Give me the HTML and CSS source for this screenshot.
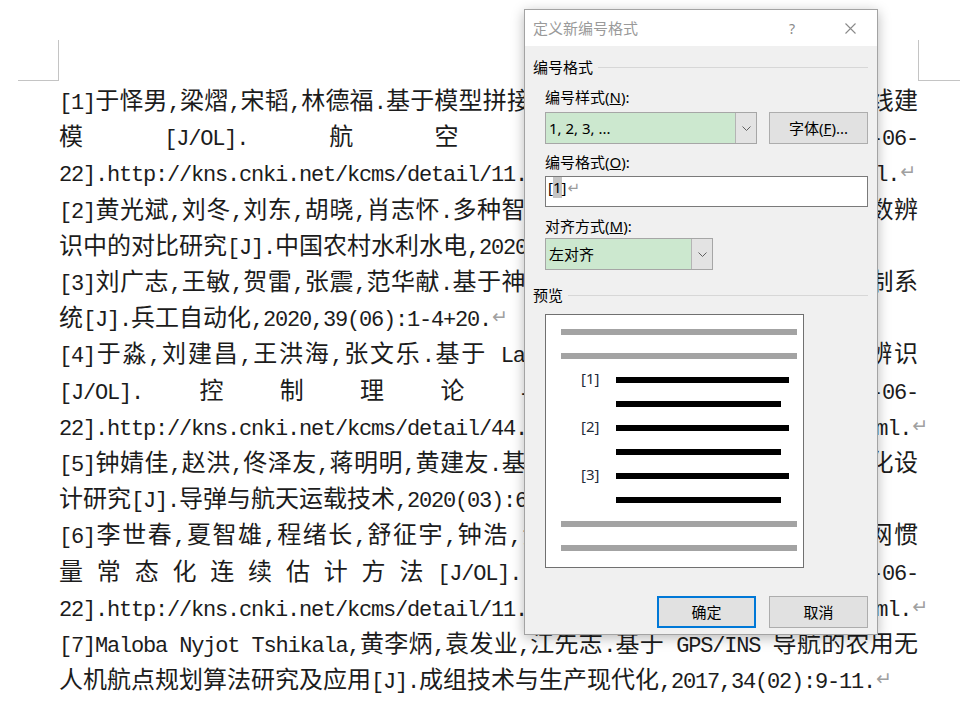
FILE: index.html
```html
<!DOCTYPE html>
<html lang="zh-CN">
<head>
<meta charset="UTF-8">
<title>定义新编号格式</title>
<link rel="stylesheet" href="styles.css">
</head>
<body>
<div class="marks">
    <div class="mark left"></div>
    <div class="mark right"></div>
</div>

<div class="doc">
    <div class="ln"><span class="m">[1]</span>于怿男<span class="m">,</span>梁熠<span class="m">,</span>宋韬<span class="m">,</span>林德福<span class="m">.</span>基于模型拼接的大展弦比飞翼布局无人机全包线建</div>
    <div class="ln">模<span class="m">[J/OL].</span>航空学报<span class="m">:1-14[2020-06-</span></div>
    <div class="ln end"><span class="m">22].http://kns.cnki.net/kcms/detail/11.1929.V.20200615.1406.0004.html.</span><span class="pm">↵</span></div>

    <div class="ln"><span class="m">[2]</span>黄光斌<span class="m">,</span>刘冬<span class="m">,</span>刘东<span class="m">,</span>胡晓<span class="m">,</span>肖志怀<span class="m">.</span>多种智能优化算法在水轮机调节系统参数辨</div>
    <div class="ln end">识中的对比研究<span class="m">[J].</span>中国农村水利水电<span class="m">,2020(06):108-112.</span><span class="pm">↵</span></div>

    <div class="ln"><span class="m">[3]</span>刘广志<span class="m">,</span>王敏<span class="m">,</span>贺雷<span class="m">,</span>张震<span class="m">,</span>范华献<span class="m">.</span>基于神经网络的电动舵机自适应滑模控制系</div>
    <div class="ln end">统<span class="m">[J].</span>兵工自动化<span class="m">,2020,39(06):1-4+20.</span><span class="pm">↵</span></div>

    <div class="ln"><span class="m">[4]</span>于淼<span class="m">,</span>刘建昌<span class="m">,</span>王洪海<span class="m">,</span>张文乐<span class="m">.</span>基于<span class="m"> Laguerre </span>函数的分数阶系统在线辨识</div>
    <div class="ln"><span class="m">[J/OL].</span>控制理论与应用<span class="m">:1-9[2020-06-</span></div>
    <div class="ln end"><span class="m">22].http://kns.cnki.net/kcms/detail/44.1240.TP.20200615.1023.0024.html.</span><span class="pm">↵</span></div>

    <div class="ln"><span class="m">[5]</span>钟婧佳<span class="m">,</span>赵洪<span class="m">,</span>佟泽友<span class="m">,</span>蒋明明<span class="m">,</span>黄建友<span class="m">.</span>基于代理模型的火箭发动机喷管优化设</div>
    <div class="ln end">计研究<span class="m">[J].</span>导弹与航天运载技术<span class="m">,2020(03):65-70.</span><span class="pm">↵</span></div>

    <div class="ln"><span class="m">[6]</span>李世春<span class="m">,</span>夏智雄<span class="m">,</span>程绪长<span class="m">,</span>舒征宇<span class="m">,</span>钟浩<span class="m">,</span>涂春鸣<span class="m">.</span>基于广域相量测量的电网惯</div>
    <div class="ln">量常态化连续估计方法<span class="m">[J/OL].</span>中国舰船研究<span class="m">:1-9[2020-06-</span></div>
    <div class="ln end"><span class="m">22].http://kns.cnki.net/kcms/detail/11.2107.TM.20200615.1502.0003.html.</span><span class="pm">↵</span></div>

    <div class="ln"><span class="m">[7]Maloba Nyjot Tshikala,</span>黄李炳<span class="m">,</span>袁发业<span class="m">,</span>江先志<span class="m">.</span>基于<span class="m"> GPS/INS </span>导航的农用无</div>
    <div class="ln end">人机航点规划算法研究及应用<span class="m">[J].</span>成组技术与生产现代化<span class="m">,2017,34(02):9-11.</span><span class="pm">↵</span></div>
</div>

<div class="dlg">
    <div class="dlg-title">
        <span class="dlg-name">定义新编号格式</span>
        <span class="dlg-help">?</span>
        <span class="dlg-close">
            <svg width="11" height="11" viewBox="0 0 11 11"><path d="M0.5 0.5L10.5 10.5M10.5 0.5L0.5 10.5" stroke="#8a8a8a" stroke-width="1.1" fill="none"/></svg>
        </span>
    </div>
    <div class="dlg-body">
        <div class="group"><span>编号格式</span><i class="rule"></i></div>

        <div class="field-label">编号样式(<u>N</u>):</div>
        <div class="row">
            <div class="combo combo-style">
                <span class="combo-val">1, 2, 3, ...</span>
                <span class="combo-btn"><svg width="9" height="5" viewBox="0 0 9 5"><polyline points="0.5,0.5 4.5,4.5 8.5,0.5" stroke="#606060" fill="none"/></svg></span>
            </div>
            <div class="btn">字体(<u>F</u>)...</div>
        </div>

        <div class="field-label">编号格式(<u>O</u>):</div>
        <div class="input">[<span class="sel">1</span>]<span class="mark-pm">↵</span></div>

        <div class="field-label">对齐方式(<u>M</u>):</div>
        <div class="combo combo-align">
            <span class="combo-val">左对齐</span>
            <span class="combo-btn"><svg width="9" height="5" viewBox="0 0 9 5"><polyline points="0.5,0.5 4.5,4.5 8.5,0.5" stroke="#606060" fill="none"/></svg></span>
        </div>

        <div class="group group-pv"><span>预览</span><i class="rule"></i></div>
        <div class="preview">
            <div class="pv-row"><i class="bar gray"></i></div>
            <div class="pv-row"><i class="bar gray"></i></div>
            <div class="pv-row"><span class="pv-num">[1]</span><i class="bar long"></i></div>
            <div class="pv-row"><i class="bar short"></i></div>
            <div class="pv-row"><span class="pv-num">[2]</span><i class="bar long"></i></div>
            <div class="pv-row"><i class="bar short"></i></div>
            <div class="pv-row"><span class="pv-num">[3]</span><i class="bar long"></i></div>
            <div class="pv-row"><i class="bar short"></i></div>
            <div class="pv-row"><i class="bar gray"></i></div>
            <div class="pv-row"><i class="bar gray"></i></div>
        </div>

        <div class="actions">
            <div class="btn primary">确定</div>
            <div class="btn">取消</div>
        </div>
    </div>
</div>
</body>
</html>
```

FILE: styles.css
```css
*{
    margin:0;
    padding:0;
    box-sizing:border-box;
}
body{
    background:#fff;
    width:970px;
    height:701px;
    overflow:hidden;
    position:relative;
}
/* page corner marks */
.marks{
    display:flex;
    justify-content:space-between;
    padding:40px 10px 0 18px;
}
.mark{
    height:41px;
    border-bottom:1px solid #c4c4c4;
}
.mark.left{
    width:41px;
    border-right:1px solid #c4c4c4;
}
.mark.right{
    width:42px;
    border-left:1px solid #c4c4c4;
}
/* document text */
.doc{
    width:859px;
    margin-left:59px;
    font-family:"Noto Sans CJK SC",sans-serif;
    font-size:24px;
    line-height:36.2px;
    color:#1c1c1c;
}
.ln{
    text-align:justify;
    text-align-last:justify;
}
.ln.end{
    text-align-last:left;
}
.m{
    font-family:"Liberation Mono",monospace;
    font-size:22px;
    letter-spacing:-1.2px;
    line-height:1;
}
.pm{
    font-family:"DejaVu Sans",sans-serif;
    font-size:19px;
    line-height:1;
    color:#a0a0a0;
    margin-left:1px;
    position:relative;
    top:-3px;
}
/* dialog */
.dlg{
    position:absolute;
    left:524px;
    top:9px;
    width:354px;
    height:626px;
    border:1px solid #a3a3a3;
    background:#f0f0f0;
    box-shadow:0 3px 12px rgba(0,0,0,0.28);
    font-family:"Noto Sans","Noto Sans CJK SC",sans-serif;
    font-size:15px;
    color:#000;
    z-index:2;
}
.dlg-title{
    height:36px;
    background:#fff;
    display:flex;
    align-items:center;
    padding-left:8px;
    color:#9a9a9a;
}
.dlg-name{
    flex:1;
    line-height:20px;
}
.dlg-help{
    width:20px;
    text-align:center;
    margin-right:25px;
    font-size:14px;
    color:#8a8a8a;
}
.dlg-close{
    width:46px;
    margin-right:4px;
    display:flex;
    justify-content:center;
    align-items:center;
}
.dlg-close svg{
    display:block;
}
.dlg-body{
    padding:11px 9px 0 8px;
}
.group{
    display:flex;
    align-items:center;
    height:20px;
    line-height:20px;
    gap:5px;
}
.group .rule{
    flex:1;
    border-top:1px solid #d7d7d7;
    height:0;
}
.group-pv{
    margin-top:15px;
}
.field-label{
    margin-left:12px;
    height:20px;
    line-height:20px;
}
.group + .field-label{
    margin-top:10px;
}
.row + .field-label{
    margin-top:8px;
}
.input + .field-label{
    margin-top:9px;
}
.row{
    display:flex;
    gap:12px;
    margin:5px 0 0 12px;
}
.combo{
    height:32px;
    display:flex;
    border:1px solid #a6a6a6;
    background:#cce8cf;
}
.combo-style{
    width:212px;
}
.combo-align{
    width:168px;
    margin:2px 0 0 12px;
}
.combo-val{
    flex:1;
    padding-left:3px;
    line-height:30px;
}
.combo-btn{
    width:21px;
    background:#e3e3e3;
    border-left:1px solid #b4b4b4;
    display:flex;
    align-items:center;
    justify-content:center;
}
.combo-btn svg{
    display:block;
}
.btn{
    width:99px;
    height:32px;
    line-height:30px;
    text-align:center;
    background:#e1e1e1;
    border:1px solid #adadad;
}
.btn.primary{
    border:2px solid #0078d7;
    line-height:28px;
}
.input{
    width:323px;
    height:31px;
    margin:4px 0 0 12px;
    background:#fff;
    border:1px solid #7a7a7a;
    padding-left:2px;
    line-height:21px;
}
.sel{
    background:#c5c5c5;
    display:inline-block;
}
.mark-pm{
    font-family:"DejaVu Sans",sans-serif;
    font-size:15px;
    color:#9a9a9a;
    margin-left:1px;
}
/* preview */
.preview{
    width:259px;
    height:254px;
    margin:9px 0 0 12px;
    border:1px solid #707070;
    background:#fff;
    padding:5px 0 0 15px;
}
.pv-row{
    height:24px;
    display:flex;
    align-items:center;
}
.pv-num{
    width:55px;
    padding:0 0 4px 20px;
    font-size:15px;
    line-height:17px;
    color:#1f2b3a;
}
.bar{
    display:block;
    height:6px;
}
.bar.gray{
    width:236px;
    background:#a3a3a3;
}
.bar.long{
    width:173px;
    background:#000;
}
.bar.short{
    width:165px;
    margin-left:55px;
    background:#000;
}
.actions{
    display:flex;
    justify-content:flex-end;
    gap:13px;
    margin-top:28px;
}
```
